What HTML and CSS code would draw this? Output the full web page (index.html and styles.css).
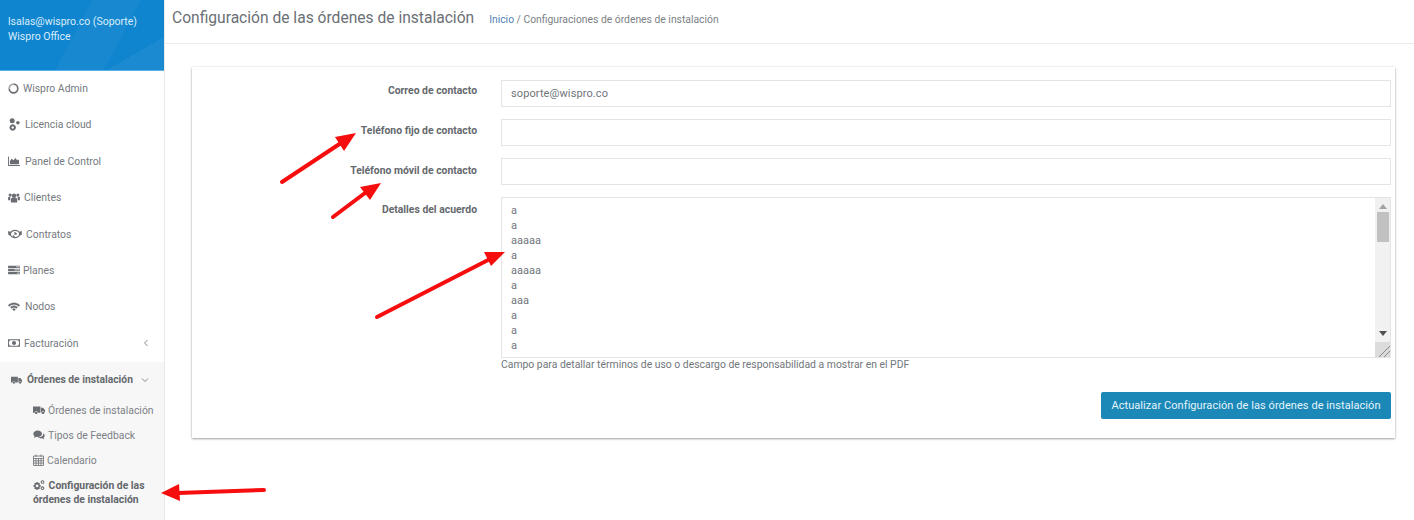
FILE: index.html
```html
<!DOCTYPE html>
<html lang="es">
<head>
<meta charset="utf-8">
<title>Configuración de las órdenes de instalación</title>
<link rel="stylesheet" href="styles.css">
</head>
<body>
<svg class="defs" width="0" height="0" aria-hidden="true">
  <defs>
    <symbol id="i-truck" viewBox="0 0 14 10"><path d="M0 .8h8.700v7.400H5.400a1.700 1.700 0 0 0-3.400 0H0zM9.300 2.300h2.400L14 5v3.200h-.7a1.700 1.700 0 0 0-3.400 0h-.6z"/><circle cx="3.700" cy="8.400" r="1.400"/><circle cx="11.600" cy="8.400" r="1.400"/></symbol>
    <symbol id="i-cogs" viewBox="0 0 14 12"><path fill-rule="evenodd" d="M3.700 2.600h2l.4 1 1-.3 1 1-.5 1 .5.800 1 .3v1.600l-1 .3-.5.800.5 1-1 1-1-.3-.4 1h-2l-.4-1-1 .3-1-1 .5-1-.5-.8-1-.3V6.400l1-.3.500-.8-.5-1 1-1 1 .3zM4.700 5.300a1.700 1.700 0 1 0 .01 0z"/><path fill-rule="evenodd" d="M11.200.2a2.200 2.200 0 1 0 .01 0zM11.200 1.500a.9.9 0 1 1-.01 0z"/><path fill-rule="evenodd" d="M11.200 7.600a2.200 2.200 0 1 0 .01 0zM11.200 8.900a.9.9 0 1 1-.01 0z"/></symbol>
  </defs>
</svg>

<div class="shell">
  <aside class="sidebar">
    <div class="profile">
      <div>lsalas@wispro.co (Soporte)</div>
      <div>Wispro Office</div>
    </div>
    <nav class="menu">
      <a class="item">
        <svg class="ico ico-ring" viewBox="0 0 12 12"><path class="ring-a" d="M6 1.300a4.700 4.700 0 1 1-4.700 4.700"/><path class="ring-b" d="M1.300 6A4.700 4.700 0 0 1 6 1.300"/></svg>
        <span class="gap-4">Wispro Admin</span>
      </a>
      <a class="item">
        <svg class="ico ico-tall" viewBox="0 0 12 13"><circle cx="4.200" cy="2.700" r="2.500"/><path fill-rule="evenodd" d="M4.700 6.300a3.200 3.200 0 1 0 .01 0zM4.700 8.300a1.200 1.200 0 1 1-.01 0z"/><circle cx="9.900" cy="4.800" r="1.800"/></svg>
        <span class="gap-5">Licencia cloud</span>
      </a>
      <a class="item">
        <svg class="ico" viewBox="0 0 13 11"><path d="M0 .5h1v9.500h12v1H0z"/><path d="M2 9V5.500l2-2.500 2 1.800L8 2.300l2 2.500 2-1V9z"/></svg>
        <span class="gap-5">Panel de Control</span>
      </a>
      <a class="item">
        <svg class="ico" viewBox="0 0 13 11"><circle cx="6.500" cy="3" r="2.400"/><circle cx="2.300" cy="2.300" r="1.700"/><circle cx="10.700" cy="2.300" r="1.700"/><path d="M3 6q3.500-1.500 7 0v4.500H3zM0 4.500h2.500L2.200 8H0zM10.500 4.500H13V8h-2.200z"/></svg>
        <span class="gap-4">Clientes</span>
      </a>
      <a class="item">
        <svg class="ico ico-hs" viewBox="0 0 14 10"><ellipse class="hs-line" cx="7" cy="5" rx="4.600" ry="3.600"/><path class="hs-line" d="M7 3v2.200l2-.6M5 6.500l1.500 1.200"/><path d="M0 2.300l2.600.2-.6 4L.4 6zM14 2.300l-2.600.2.600 4 1.600-.5z"/></svg>
        <span class="gap-4">Contratos</span>
      </a>
      <a class="item">
        <svg class="ico" viewBox="0 0 13 11"><path d="M0 .8h13v2.600H0zM0 4.200h13v2.600H0zM0 7.600h13v2.600H0z"/><path class="cut" d="M9 1.600h3.500v.9H9zM7 5h5.500v.9H7zM10 8.400h2.500v.9H10z"/></svg>
        <span class="gap-3">Planes</span>
      </a>
      <a class="item">
        <svg class="ico ico-bold" viewBox="0 0 13 10"><path d="M6.500 0.500C9 .5 11.200 1.500 12.900 3.100l-1.200 1.300C10.300 3.100 8.500 2.300 6.500 2.300S2.700 3.100 1.300 4.400L.1 3.100C1.800 1.500 4 .5 6.500.5zM6.500 3.700c1.500 0 2.900.6 3.900 1.600L9.200 6.600c-.7-.7-1.700-1.100-2.700-1.100s-2 .4-2.700 1.100L2.600 5.300c1-1 2.400-1.600 3.900-1.600zM6.500 6.700c.7 0 1.300.3 1.700.7L6.500 9.300 4.800 7.400c.4-.4 1-.7 1.700-.7z"/></svg>
        <span class="gap-5">Nodos</span>
      </a>
      <a class="item">
        <svg class="ico" viewBox="0 0 13 10"><path fill-rule="evenodd" d="M0 1h13v8H0zM1 3v4h.9v1h9.200V7h.9V3h-.9V2H1.900v1zM6.500 2.800a2.200 2.200 0 1 0 .01 0z"/></svg>
        <span class="gap-4">Facturación</span>
        <svg class="chev chev-left" viewBox="0 0 6 8"><path d="M4.500 1L1.500 4l3 3"/></svg>
      </a>
      <div class="group">
        <a class="item item-open">
          <svg class="ico ico-truck"><use href="#i-truck"/></svg>
          <span class="gap-5">Órdenes de instalación</span>
          <svg class="chev chev-down" viewBox="0 0 8 6"><path d="M1 1.500l3 3 3-3"/></svg>
        </a>
        <a class="sub">
          <svg class="ico"><use href="#i-truck"/></svg>
          <span class="gap-3">Órdenes de instalación</span>
        </a>
        <a class="sub">
          <svg class="ico" viewBox="0 0 12 10"><path d="M4.700.5C7.100.5 9 1.900 9 3.700S7.100 6.900 4.700 6.900c-.5 0-1 0-1.400-.2L1 8l.6-2C.7 5.400.3 4.600.3 3.700.3 1.900 2.300.5 4.700.5z"/><path d="M10 3.200c1.100.6 1.700 1.500 1.700 2.500 0 .8-.4 1.500-1.100 2l.5 1.800-2-1.200c-1.700.3-3.300-.2-4.200-1.100 3.300 0 6.100-1.300 5.100-4z"/></svg>
          <span class="gap-3">Tipos de Feedback</span>
        </a>
        <a class="sub">
          <svg class="ico ico-cal" viewBox="0 0 11 12"><path d="M.5 2h10v9.500H.5zM.5 4.500h10M.5 6.800h10M.5 9.100h10M3 4.500v7M5.500 4.500v7M8 4.500v7M3 .5v2.500M8 .5v2.500"/></svg>
          <span class="gap-3">Calendario</span>
        </a>
        <a class="sub sub-active">
          <svg class="ico ico-inline"><use href="#i-cogs"/></svg>
          Configuración de las órdenes de instalación
        </a>
      </div>
    </nav>
  </aside>

  <main class="main">
    <header class="topbar">
      <h1 class="title">Configuración de las órdenes de instalación</h1>
      <p class="crumbs"><a class="link">Inicio</a> / Configuraciones de órdenes de instalación</p>
    </header>
    <section class="card">
      <form class="form">
        <label class="label">Correo de contacto</label>
        <input class="input" type="text" value="soporte@wispro.co">
        <label class="label label-mid">Teléfono fijo de contacto</label>
        <input class="input" type="text">
        <label class="label label-low">Teléfono móvil de contacto</label>
        <input class="input" type="text">
        <label class="label label-low">Detalles del acuerdo</label>
        <div class="field-col">
          <div class="textarea">
            <div class="lines">a<br>a<br>aaaaa<br>a<br>aaaaa<br>a<br>aaa<br>a<br>a<br>a</div>
            <div class="scrollbar">
              <span class="arrow-up"></span>
              <span class="thumb"></span>
              <span class="arrow-down"></span>
              <span class="resizer"></span>
            </div>
          </div>
          <p class="help">Campo para detallar términos de uso o descargo de responsabilidad a mostrar en el PDF</p>
        </div>
        <div class="actions">
          <button class="btn" type="button">Actualizar Configuración de las órdenes de instalación</button>
        </div>
      </form>
    </section>
  </main>
</div>

<svg class="arrows" width="1414" height="520" viewBox="0 0 1414 520" aria-hidden="true">
  <g class="arrow">
    <path d="M282 182L344 141"/><polygon points="356,133 335,137 344,151"/>
    <path d="M333 217L369 190"/><polygon points="381,183 360,187 370,200"/>
    <path d="M377 317L492 258"/><polygon points="505,252 484,252 491,266"/>
    <path d="M264 490L178 493"/><polygon points="161,493 179,484 180,501"/>
  </g>
</svg>
</body>
</html>
```

FILE: styles.css
```css
* { box-sizing: border-box; }
html, body { margin: 0; height: 520px; overflow: hidden; background: #fff; }
body { font-family: Roboto, "Liberation Sans", sans-serif; font-size: 10.500px; color: #70757a; position: relative; }
.defs { position: absolute; }
.shell { display: grid; grid-template-columns: 165px 1fr; height: 520px; }

.sidebar { background: #fff; border-right: 1px solid #eaeaea; overflow: hidden; }
.profile {
  height: 71px; padding: 14px 8px 0; color: #d9edfa; font-size: 10.500px; line-height: 15px;
  border-bottom: 1px solid #59aee6;
  background:
    linear-gradient(118deg, transparent 0 46%, rgba(255,255,255,.04) 46% 70%, transparent 70%),
    linear-gradient(150deg, transparent 0 80%, rgba(255,255,255,.05) 80%),
    #0f84cf;
}
.menu { display: flex; flex-direction: column; margin-top: -.7px; }
.item { display: flex; align-items: center; height: 36.400px; padding-left: 8px; color: #757a80; font-size: 10.400px; }
.ico { width: 12px; height: 10px; fill: #6a6d71; flex: none; }
.ico-ring { fill: none; width: 11px; height: 11px; }
.ring-a { stroke: #6a6d71; stroke-width: 1.800; }
.ring-b { stroke: #a6a9ac; stroke-width: 1.800; }
.ico-tall { height: 13px; }
.ico-truck { width: 11px; margin-left: 3px; }
.ico-hs { width: 14px; }
.hs-line { fill: none; stroke: #6a6d71; stroke-width: 1.200; }
.ico-bold { stroke: #6a6d71; stroke-width: .3; }
.ico-cal { fill: none; stroke: #6a6d71; stroke-width: .8; width: 11px; height: 12px; }
.cut { fill: #fff; }
.gap-3 { margin-left: 3px; }
.gap-4 { margin-left: 4px; }
.gap-5 { margin-left: 5px; }
.chev { fill: none; stroke: #85898d; stroke-width: 1; }
.chev-left { width: 6px; height: 8px; margin-left: auto; margin-right: 15px; }
.chev-down { width: 8px; height: 6px; margin-left: 8px; }
.group { background: #f7f7f7; height: 160px; margin-top: .1px; }
.item-open { font-weight: 700; font-size: 10.300px; color: #666a6e; }
.sub { display: flex; align-items: center; height: 25px; padding-left: 33px; font-size: 10.400px; color: #7d8186; }
.sub-active { display: block; height: auto; padding-top: 6px; line-height: 14px; font-weight: 700; font-size: 10.400px; color: #63676b; padding-right: 12px; }
.ico-inline { margin-right: 1px; vertical-align: -1px; }

.main { min-width: 0; }
.topbar { display: flex; align-items: baseline; height: 44px; padding: 8px 0 0 7px; border-bottom: 1px solid #ececec; }
.title { margin: 0; font-size: 15.600px; font-weight: 400; line-height: 20px; color: #6b7075; }
.crumbs { margin: 0 0 0 15px; font-size: 10.350px; color: #7b7f85; }
.link { color: #4f7fb5; }

.card {
  margin: 23px 19px 0 27px; height: 371px; padding: 13px 4px 0 0; background: #fff;
  box-shadow: 0 1px 2px rgba(0,0,0,.35), 0 0 3px rgba(0,0,0,.08);
}
.form { display: grid; grid-template-columns: 285px 1fr; column-gap: 24px; row-gap: 12px; align-items: start; }
.label { text-align: right; font-weight: 700; font-size: 10.400px; line-height: 14px; padding-top: 4px; color: #65696e; }
.label-mid { padding-top: 5px; }
.label-low { padding-top: 6px; }
.input { height: 27px; width: 100%; border: 1px solid #e4e4e4; padding: 0 9px; font: 11px Roboto, sans-serif; letter-spacing: .1px; color: #70757a; background: #fff; outline: 0; }
.field-col { min-width: 0; }
.textarea { display: flex; height: 161px; border: 1px solid #e4e4e4; }
.lines { flex: 1; padding: 5px 9px 0; line-height: 15px; font-size: 11px; color: #70757a; overflow: hidden; }
.scrollbar { width: 15px; background: #f1f1f1; position: relative; display: flex; flex-direction: column; align-items: center; }
.arrow-up { margin-top: 6px; border: 4px solid transparent; border-top: 0; border-bottom: 5px solid #a3a3a3; }
.thumb { margin-top: 3px; width: 12px; height: 30px; background: #c1c1c1; }
.arrow-down { margin-top: auto; margin-bottom: 21px; border: 4px solid transparent; border-bottom: 0; border-top: 5px solid #505050; }
.resizer { position: absolute; right: 0; bottom: 0; width: 15px; height: 15px; background: linear-gradient(135deg, #dcdcdc 0 62%, #8a8a8a 62% 66%, #dcdcdc 66% 78%, #8a8a8a 78% 82%, #dcdcdc 82%); }
.help { margin: 0; font-size: 10.400px; line-height: 14px; color: #71767b; }
.actions { grid-column: 2; display: flex; justify-content: flex-end; padding-top: 8px; }
.btn { height: 27px; width: 290px; padding: 0; border: 0; border-radius: 2px; background: #1b88b8; color: #e6f4fa; font: 11px Roboto, sans-serif; letter-spacing: .07px; }

.arrows { position: absolute; left: 0; top: 0; pointer-events: none; }
.arrow path { fill: none; stroke: #f60d0d; stroke-width: 4; stroke-linecap: round; }
.arrow polygon { fill: #f60d0d; }
```
